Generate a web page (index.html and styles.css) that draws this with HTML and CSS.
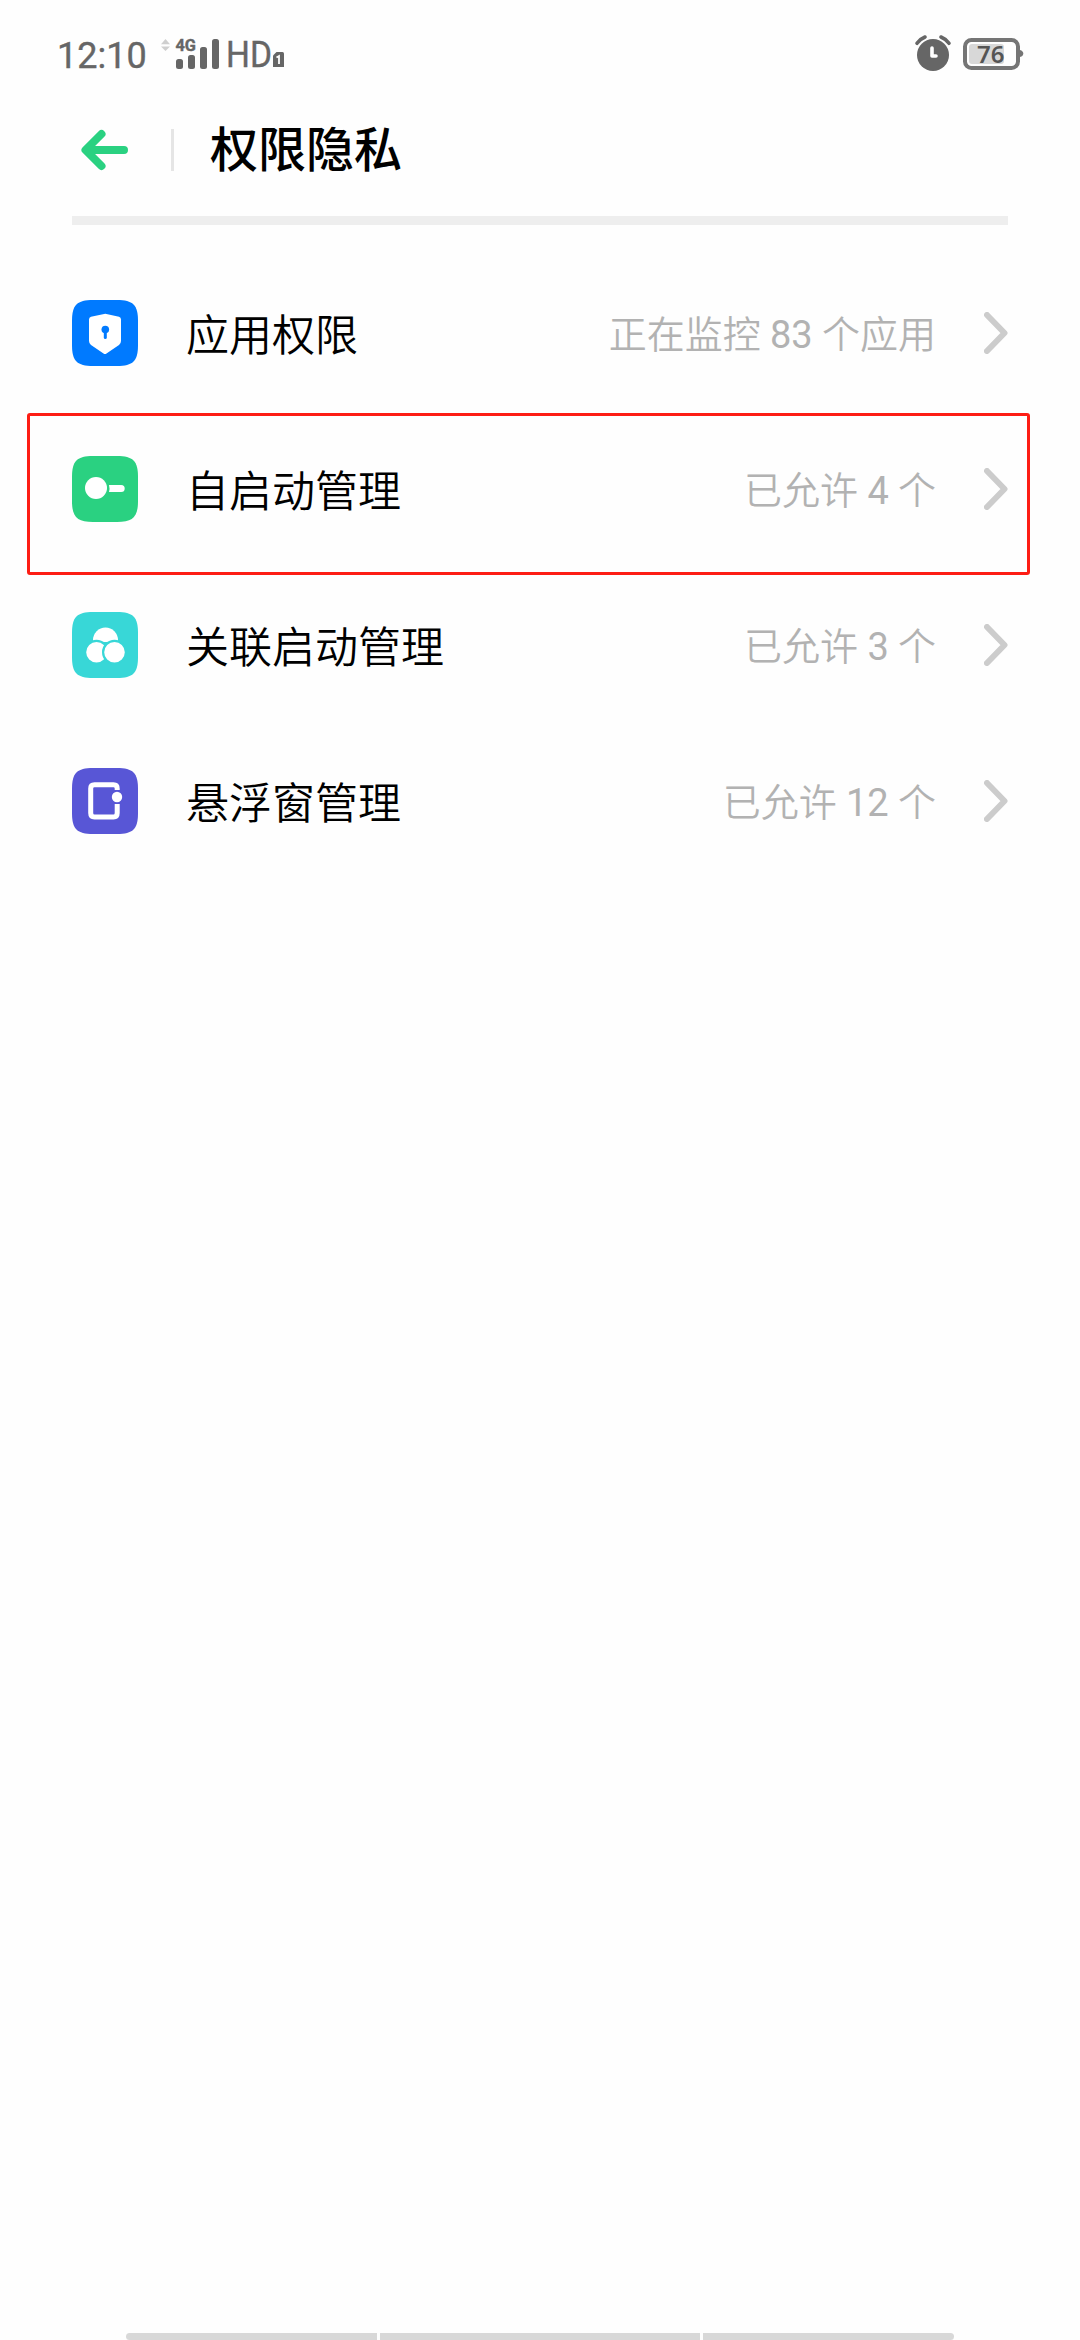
FILE: index.html
```html
<!DOCTYPE html>
<html lang="zh-CN">
<head>
<meta charset="utf-8">
<title>权限隐私</title>
<link rel="stylesheet" href="styles.css">
</head>
<body>
<div class="screen">
  <div class="status-bar">
    <div class="status-left">
      <span class="clock">12:10</span>
      <svg class="signal" width="126" height="52" viewBox="160 28 126 52">
        <path d="M161 44.3L165.500 39L170 44.300zM161 46.500H170L165.500 51z" fill="#cfcfcf"/>
        <text class="net-type" x="175.500" y="51" textLength="20.500" lengthAdjust="spacingAndGlyphs">4G</text>
        <g fill="#666">
          <rect x="176" y="59" width="7" height="10" rx="2.500"/>
          <rect x="188" y="55" width="7" height="14" rx="2.500"/>
          <rect x="200" y="47" width="7" height="22" rx="2.500"/>
          <rect x="212" y="39" width="7" height="30" rx="2.500"/>
          <path d="M276.500 52H282.500Q284 52 284 53.500V67H273V55.500z"/>
        </g>
        <text class="hd" x="226" y="67" textLength="46" lengthAdjust="spacingAndGlyphs">HD</text>
        <path d="M276.500 57.500L279 56V64" fill="none" stroke="#fff" stroke-width="1.800"/>
      </svg>
    </div>
    <div class="status-right">
      <svg class="alarm" width="38" height="38" viewBox="914 34 38 38">
        <circle cx="933" cy="55" r="16" fill="#666"/>
        <path d="M917 43.300Q920 39 925 37M941 37Q946 39 949 43.300" fill="none" stroke="#666" stroke-width="3.600" stroke-linecap="round"/>
        <path d="M932 48V56H936" fill="none" stroke="#fff" stroke-width="3.600" stroke-linecap="round" stroke-linejoin="round"/>
      </svg>
      <svg class="battery" width="62" height="34" viewBox="962 37 62 34">
        <rect x="965" y="40" width="53" height="28" rx="6.500" fill="none" stroke="#757575" stroke-width="4"/>
        <path d="M1020 50Q1023.300 51 1023.300 53.500T1020 57z" fill="#757575"/>
        <rect x="969" y="44" width="35" height="20" rx="3" fill="#d8d8d8"/>
        <text class="level" x="977" y="63">76</text>
      </svg>
    </div>
  </div>

  <div class="title-bar">
    <svg class="back" width="48" height="42" viewBox="81 129 48 42">
      <path d="M124 150H86M101.500 134L85.500 150L101.500 166" fill="none" stroke="#2ad181" stroke-width="8" stroke-linecap="round" stroke-linejoin="round"/>
    </svg>
    <span class="separator"></span>
    <h1 class="title">权限隐私</h1>
  </div>
  <div class="divider"></div>

  <div class="list">
    <div class="row">
      <svg class="icon" viewBox="0 0 66 66">
        <path d="M0 21C0 5 5 0 21 0H45C61 0 66 5 66 21V45C66 61 61 66 45 66H21C5 66 0 61 0 45z" fill="#007aff"/>
        <path d="M19 16.800L33.300 13.700L47 16.800Q49 17.300 49 19.500V41Q49 43.500 47 45L34.500 53.500Q33 54.500 31.500 53.500L19 45Q17 43.500 17 41V19.500Q17 17.300 19 16.800z" fill="#fff"/>
        <circle cx="33.300" cy="29.500" r="3.800" fill="#007aff"/>
        <path d="M33.300 31V37.500" stroke="#007aff" stroke-width="3" stroke-linecap="round"/>
      </svg>
      <span class="label">应用权限</span>
      <span class="value">正在监控 <span class="count">83</span> 个应用</span>
      <svg class="chevron" viewBox="0 0 24 42"><path d="M3 3L20.500 21L3 39"/></svg>
    </div>
    <div class="row">
      <svg class="icon" viewBox="0 0 66 66">
        <path d="M0 21C0 5 5 0 21 0H45C61 0 66 5 66 21V45C66 61 61 66 45 66H21C5 66 0 61 0 45z" fill="#2ad181"/>
        <circle cx="24" cy="32" r="11" fill="#fff"/>
        <path d="M37 29H49.200A3.500 3.500 0 0 1 49.200 36H37Q38 32.500 37 29z" fill="#fff"/>
      </svg>
      <span class="label">自启动管理</span>
      <span class="value">已允许 <span class="count">4</span> 个</span>
      <svg class="chevron" viewBox="0 0 24 42"><path d="M3 3L20.500 21L3 39"/></svg>
      <span class="highlight"></span>
    </div>
    <div class="row">
      <svg class="icon" viewBox="0 0 66 66">
        <path d="M0 21C0 5 5 0 21 0H45C61 0 66 5 66 21V45C66 61 61 66 45 66H21C5 66 0 61 0 45z" fill="#38d7d7"/>
        <path d="M21 28A12.500 12.500 0 0 1 46 28L45 30H22z" fill="#fff"/>
        <g fill="#fff" stroke="#38d7d7" stroke-width="2.200">
          <circle cx="24.500" cy="40.200" r="11.400"/>
          <circle cx="42.500" cy="40.200" r="11.400"/>
        </g>
      </svg>
      <span class="label">关联启动管理</span>
      <span class="value">已允许 <span class="count">3</span> 个</span>
      <svg class="chevron" viewBox="0 0 24 42"><path d="M3 3L20.500 21L3 39"/></svg>
    </div>
    <div class="row">
      <svg class="icon" viewBox="0 0 66 66">
        <path d="M0 21C0 5 5 0 21 0H45C61 0 66 5 66 21V45C66 61 61 66 45 66H21C5 66 0 61 0 45z" fill="#5856d6"/>
        <path d="M45.200 22V20.500Q45.200 16.700 41.500 16.700H22.500Q18.700 16.700 18.700 20.500V45Q18.700 49 22.500 49H41.500Q45.200 49 45.200 45V36" fill="none" stroke="#fff" stroke-width="5"/>
        <circle cx="45" cy="29" r="5.200" fill="#fff"/>
      </svg>
      <span class="label">悬浮窗管理</span>
      <span class="value">已允许 <span class="count">12</span> 个</span>
      <svg class="chevron" viewBox="0 0 24 42"><path d="M3 3L20.500 21L3 39"/></svg>
    </div>
  </div>

  <div class="nav-hints"><span></span><span></span><span></span></div>
</div>
</body>
</html>
```
FILE: styles.css
```css
* {
  box-sizing: border-box;
}

body {
  margin: 0;
  background: #fefefe;
  font-family: Roboto, "Noto Sans CJK SC", sans-serif;
}

.screen {
  display: flex;
  flex-direction: column;
  width: 1080px;
  height: 2340px;
}

.status-bar {
  display: flex;
  justify-content: space-between;
  height: 108px;
  padding: 28px 56px 0 57px;
}

.status-left,
.status-right {
  display: flex;
}

.clock {
  width: 103px;
  padding-top: 7px;
  font-size: 36px;
  line-height: 42px;
  color: #666;
  -webkit-text-stroke: 0.4px #666;
}

.net-type {
  font: 700 17px Roboto, sans-serif;
  fill: #666;
  stroke: #666;
  stroke-width: 0.4px;
}

.hd {
  font: 400 36px Roboto, sans-serif;
  fill: #666;
  stroke: #666;
  stroke-width: 0.4px;
}

.alarm {
  margin: 6px 10px 0 0;
}

.battery {
  margin-top: 9px;
}

.level {
  font: 600 24px "Noto Sans", sans-serif;
  fill: #555;
}

.title-bar {
  display: flex;
  align-items: center;
  height: 84px;
  padding-left: 81px;
}

.separator {
  width: 3px;
  height: 42px;
  margin-left: 42px;
  background: #e5e5e5;
}

.title {
  margin: 2px 0 0 36px;
  font-size: 48px;
  font-weight: 500;
  line-height: 72px;
  color: #000;
}

.divider {
  height: 9px;
  margin: 24px 72px 0;
  background: #eee;
}

.list {
  padding-top: 30px;
}

.row {
  position: relative;
  display: flex;
  align-items: center;
  height: 156px;
  padding: 0 72px;
}

.icon {
  width: 66px;
  height: 66px;
}

.label {
  margin: 0 0 3px 48px;
  font-size: 43px;
  font-weight: 350;
  color: #000;
}

.value {
  margin: 0 0 3px auto;
  font-size: 38px;
  font-weight: 350;
  color: #b2b2b2;
}

.count {
  font-weight: 400;
}

.chevron {
  width: 24px;
  height: 42px;
  margin-left: 48px;
  fill: none;
  stroke: #ccc;
  stroke-width: 6px;
  stroke-linecap: round;
  stroke-linejoin: round;
}

.highlight {
  position: absolute;
  inset: 2px 50px -8px 27px;
  border: 3px solid #fd1d14;
  border-radius: 3px;
}

.nav-hints {
  display: grid;
  grid-template-columns: 251px 320px 251px;
  gap: 3px;
  height: 7px;
  margin: auto 126px 0;
}

.nav-hints span {
  background: #d8d8d8;
}

.nav-hints span:first-child {
  border-radius: 4px 0 0 4px;
}

.nav-hints span:last-child {
  border-radius: 0 4px 4px 0;
}
```
